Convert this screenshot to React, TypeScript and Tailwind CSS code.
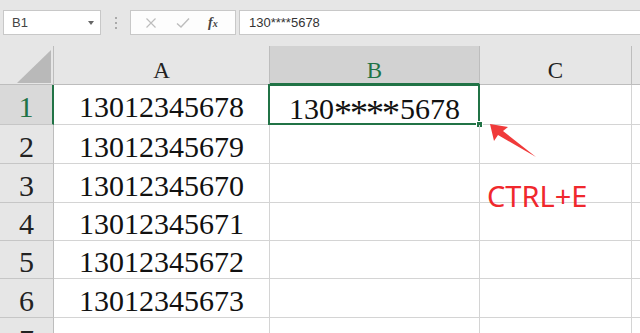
import React from 'react';

// Phone numbers in column A, row 1 of B holds the masked version
const phones = ['13012345678', '13012345679', '13012345670', '13012345671', '13012345672', '13012345673', ''];
const rowHeights = ['h-[40px]', 'h-[39px]', 'h-[39px]', 'h-[38px]', 'h-[38px]', 'h-[39px]', 'h-[39px]'];

const serif = "font-['Liberation_Serif',serif]";
const sans = "font-['Liberation_Sans',Arial,sans-serif]";

function Toolbar() {
  return (
    <div className="flex h-[46px] items-start bg-[#e6e6e6] pt-[10px]">
      {/* Name box */}
      <div className="ml-[3px] flex h-[25px] w-[98px] items-center justify-between border border-[#c8c8c8] bg-white pl-[8px] pr-[6px]">
        <span className={`${sans} text-[13px] text-[#444]`}>B1</span>
        <span className="h-0 w-0 border-x-[3px] border-t-[4px] border-x-transparent border-t-[#666]" />
      </div>
      {/* Dots */}
      <div className="ml-[14px] flex h-[25px] flex-col items-center justify-center gap-[3px]">
        <span className="h-[2px] w-[2px] bg-[#aaa]" />
        <span className="h-[2px] w-[2px] bg-[#aaa]" />
        <span className="h-[2px] w-[2px] bg-[#aaa]" />
      </div>
      {/* Cancel / enter / fx */}
      <div className="ml-[13px] flex h-[25px] w-[106px] items-center border border-[#c8c8c8] bg-[#fdfdfd]">
        <svg width="12" height="12" viewBox="0 0 12 12" className="ml-[14px]">
          <path d="M1.5 1.5 L10.5 10.5 M10.5 1.5 L1.5 10.5" stroke="#bdbdbd" strokeWidth="1.2" fill="none" />
        </svg>
        <svg width="14" height="12" viewBox="0 0 14 12" className="ml-[19px]">
          <path d="M1 6.5 L5 10 L13 1.5" stroke="#bdbdbd" strokeWidth="1.4" fill="none" />
        </svg>
        <span className={`${serif} ml-[18px] text-[14px] font-bold italic text-[#444]`}>
          f<span className="text-[10px]">x</span>
        </span>
      </div>
      {/* Formula input */}
      <div className="ml-[3px] flex h-[25px] flex-1 items-center border border-r-0 border-[#c8c8c8] bg-white pl-[9px]">
        <span className={`${sans} text-[13px] text-[#333]`}>130****5678</span>
      </div>
    </div>
  );
}

export default function App() {
  return (
    <div className="relative h-[333px] w-[640px] overflow-hidden bg-white">
      <Toolbar />

      <div className="grid grid-cols-[54px_216px_210px_152px_1fr]">
        {/* Column headers */}
        <div className="flex h-[39px] items-start justify-end border-r border-b border-[#bdbdbd] bg-[#e6e6e6] pr-[2px] pt-[4px]">
          <div className="h-[33px] w-[34px] bg-[#b9b9b9] [clip-path:polygon(100%_0,100%_100%,0_100%)]" />
        </div>
        <div className={`${serif} flex h-[39px] items-center justify-center border-r border-b border-[#bdbdbd] bg-[#e6e6e6] pt-[11px] text-[23px] leading-none text-[#222]`}>A</div>
        <div className={`${serif} flex h-[39px] items-center justify-center border-r border-b-2 border-r-[#bdbdbd] border-b-[#217346] bg-[#d2d2d2] pt-[11px] text-[23px] leading-none text-[#217346]`}>B</div>
        <div className={`${serif} flex h-[39px] items-center justify-center border-r border-b border-[#bdbdbd] bg-[#e6e6e6] pt-[11px] text-[23px] leading-none text-[#222]`}>C</div>
        <div className="h-[39px] border-b border-[#bdbdbd] bg-[#e6e6e6]" />

        {phones.map((p, i) => (
          <React.Fragment key={i}>
            <div
              className={`${serif} ${rowHeights[i]} flex items-center justify-center border-b border-b-[#c6c6c6] pt-[5px] text-[30px] leading-none ${
                i === 0
                  ? 'border-r-2 border-r-[#217346] bg-[#d9d9d9] text-[#217346]'
                  : 'border-r border-r-[#bdbdbd] bg-[#e6e6e6] text-[#222]'
              }`}
            >
              {i + 1}
            </div>
            <div className={`${serif} ${rowHeights[i]} flex items-center justify-center border-r border-b border-[#d4d4d4] pt-[5px] text-[30px] leading-none text-[#111]`}>
              {p}
            </div>
            <div className={`${serif} ${rowHeights[i]} relative flex items-center justify-center border-r border-b border-[#d4d4d4] pt-[5px] text-[30px] leading-none text-[#111]`}>
              {i === 0 && (
                <>
                  <span>
                    130
                    <span className="relative top-[6px] text-[36px] tracking-[-2px]">****</span>
                    <span className="ml-[2px]">5678</span>
                  </span>
                  <div className="absolute -top-[1px] -left-[2px] -right-[1px] -bottom-[1px] border-2 border-[#217346]" />
                  <div className="absolute -right-[4px] -bottom-[4px] h-[7px] w-[7px] border border-white bg-[#217346]" />
                </>
              )}
            </div>
            <div className={`${rowHeights[i]} border-r border-b border-[#d4d4d4]`} />
            <div className={`${rowHeights[i]} border-b border-[#d4d4d4]`} />
          </React.Fragment>
        ))}
      </div>

      {/* Red annotation arrow */}
      <svg className="absolute left-[485px] top-[120px]" width="56" height="42" viewBox="0 0 56 42">
        <polygon points="5,4 23,7 18,11 51,37 13,15 9,21" fill="#f03a3a" />
      </svg>
      <div className="absolute left-[487px] top-[181px] font-['Noto_Sans',sans-serif] text-[29px] leading-none text-[#f0282d]">
        CTRL+E
      </div>
    </div>
  );
}
